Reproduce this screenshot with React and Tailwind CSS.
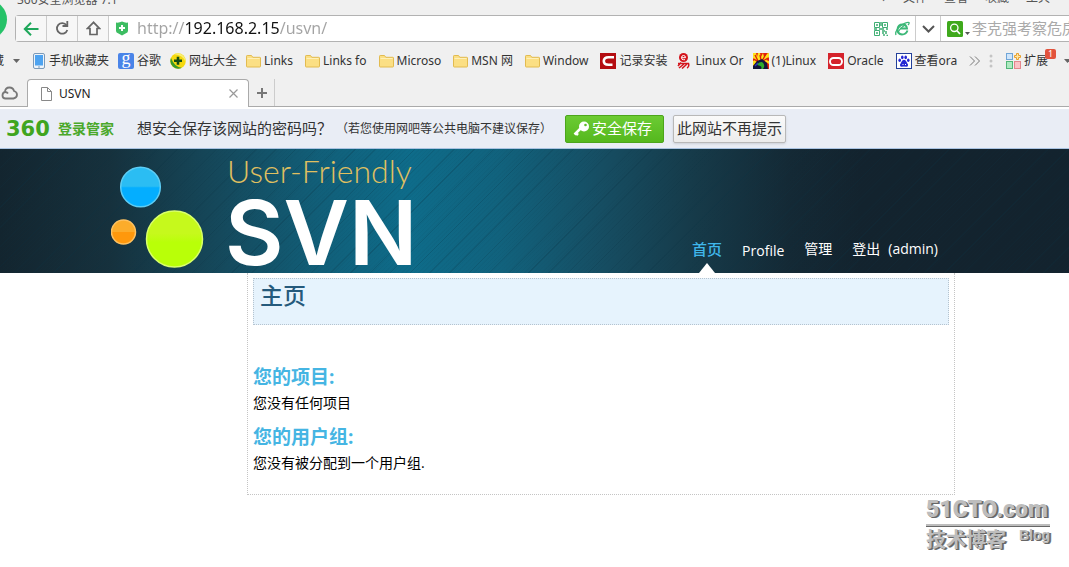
import React from "react";

const uiFont = "font-['Noto_Sans','Noto_Sans_CJK_SC',sans-serif]";

const Folder = () => (
  <svg width="15" height="14" viewBox="0 0 15 14" className="shrink-0">
    <path d="M.5 2.2q0-.7.7-.7h4.3l1.3 1.8h7q.7 0 .7.7v8.3q0 .7-.7.7H1.2q-.7 0-.7-.7z" fill="#fbdf84" stroke="#e2bb50" />
    <path d="M1.5 4.5h12" stroke="#fff0b8" />
  </svg>
);

const Phone = () => (
  <svg width="12" height="16" viewBox="0 0 12 16" className="mx-px shrink-0">
    <rect x=".5" y=".5" width="11" height="15" rx="1.5" fill="#eef4fa" stroke="#7c9ab8" />
    <rect x="2" y="2" width="8" height="10.5" fill="#4ea3f0" />
    <path d="M5 14h2" stroke="#7c9ab8" />
  </svg>
);

const Google = () => (
  <span className="flex size-4 shrink-0 items-start justify-center rounded-xs bg-[#4a84e8] font-['Liberation_Serif',serif] text-lg leading-[10px] text-white">
    g
  </span>
);

const Sites = () => (
  <svg width="16" height="16" viewBox="0 0 16 16" className="shrink-0">
    <circle cx="8" cy="8" r="7.8" fill="#f5d90e" />
    <path d="M1 5A7.8 7.8 0 0 0 12 14.700Q5 15 1 5z" fill="#3a9a2a" />
    <path d="M4 1.300A7.800 7.800 0 0 1 15.500 9Q13 2 4 1.300z" fill="#f9ee70" />
    <path d="M8 3.800v8M4 7.800h8" stroke="#134d12" strokeWidth="2.600" />
  </svg>
);

const RedC = () => (
  <svg width="16" height="16" viewBox="0 0 16 16" className="shrink-0">
    <rect width="16" height="16" fill="#b40d12" />
    <path d="M14 4.200H8.500Q3.800 4.200 3.800 8t4.700 3.800H12.500" fill="none" stroke="#fff" strokeWidth="2.600" />
  </svg>
);

const RedYi = () => (
  <svg width="14" height="16" viewBox="0 0 14 16" className="mx-px shrink-0">
    <circle cx="6.500" cy="4.500" r="4.500" fill="#d4141c" />
    <path d="M4.500 4.700h4q0-2.200-2-2.200t-2 2.200 2 2h1.500" fill="none" stroke="#fff" />
    <path d="M1 10.500h10.500q1 3.500-1.500 4.500M4 9.500L1 13M7 11l-5 4M10 11l-5 4.500" fill="none" stroke="#d4141c" strokeWidth="1.500" />
  </svg>
);

const Flame = () => (
  <svg width="16" height="16" viewBox="0 0 16 16" className="shrink-0">
    <rect width="16" height="16" fill="#e3200c" />
    <path d="M0 0h3l1 4 1-4h2l1 4 2-4 1 4 4-4h1v4l-3 3 3 1v3L10 7 4 9 0 13V8l2-1-2-2z" fill="#ffe11a" />
    <path d="M2 2l3 6M7 2l1 5M13 1L9 8M1 6l4 3M15 5l-5 3" stroke="#d81d08" strokeWidth="1.300" />
    <path d="M0 16v-3l4-5 5-2 5 4 1 6z" fill="#12163a" />
    <path d="M4 12q1-3 5-3 4 3 1 7H8q2-3-4-4z" fill="#2eab2b" />
    <path d="M2 13l3-3" stroke="#2b36c4" strokeWidth="1.500" />
  </svg>
);

const OracleIcon = () => (
  <svg width="16" height="16" viewBox="0 0 16 16" className="shrink-0">
    <rect width="16" height="16" fill="#d5232b" />
    <rect x="2" y="5" width="12" height="7" rx="3.500" fill="none" stroke="#fff" strokeWidth="1.900" />
  </svg>
);

const Paw = () => (
  <svg width="16" height="16" viewBox="0 0 16 16" className="shrink-0">
    <rect x=".5" y=".5" width="15" height="15" fill="#fff" stroke="#23409a" />
    <g fill="#2528d4">
      <ellipse cx="3.700" cy="7.300" rx="1.300" ry="1.800" />
      <ellipse cx="6.300" cy="4.300" rx="1.300" ry="1.900" />
      <ellipse cx="9.700" cy="4.300" rx="1.300" ry="1.900" />
      <ellipse cx="12.300" cy="7.300" rx="1.300" ry="1.800" />
      <path d="M8 6.800q1.500 0 2.500 2t1.500 2.700q.5 2.300-1.500 2.300L8 13.500l-2.500.3q-2 0-1.500-2.300.5-.7 1.500-2.700t2.500-2z" />
    </g>
    <path d="M6.500 11.500h1M9 11.500h1" stroke="#fff" />
  </svg>
);

const Extensions = () => (
  <svg width="16" height="16" viewBox="0 0 16 16" className="shrink-0">
    <rect x=".5" y=".5" width="6" height="6" fill="#cfe5fa" stroke="#6fa5d8" />
    <path d="M10.500.5h2v2h2v2h-2v2h-2v-2h-2v-2h2z" fill="#fde7a8" stroke="#e8a02e" />
    <rect x=".5" y="8.500" width="6" height="7" fill="#aee9c0" stroke="#52b778" />
    <rect x="8.500" y="8.500" width="6" height="7" fill="#fbc2c6" stroke="#e3878d" />
  </svg>
);

const bookmarks = [
  { label: "手机收藏夹", icon: Phone },
  { label: "谷歌", icon: Google },
  { label: "网址大全", icon: Sites },
  { label: "Links", icon: Folder, latin: true },
  { label: "Links fo", icon: Folder, latin: true },
  { label: "Microso", icon: Folder, latin: true },
  { label: "MSN 网", icon: Folder, latin: true },
  { label: "Window", icon: Folder, latin: true },
  { label: "记录安装", icon: RedC },
  { label: "Linux Or", icon: RedYi },
  { label: "(1)Linux", icon: Flame, latin: true },
  { label: "Oracle", icon: OracleIcon, latin: true },
  { label: "查看ora", icon: Paw },
];

const TitleBar = () => (
  <div className="flex h-[15px] justify-between overflow-hidden pr-[19px] pl-[17px] text-xs leading-4 text-[#555]">
    <span className="-mt-2">360安全浏览器 7.1</span>
    <div className="-mt-2.5 flex gap-[17px]">
      <span>›</span>
      <span>文件</span>
      <span>查看</span>
      <span>收藏</span>
      <span>工具</span>
    </div>
  </div>
);

const AddressBar = () => (
  <div className="ml-[15px] flex h-[27px] rounded-l-sm border border-r-0 border-[#b2b2b2] bg-white">
    <button aria-label="后退" className="flex w-[31px] items-center justify-center border-r border-[#ccc] bg-[#f7f7f7]">
      <svg width="16" height="14" viewBox="0 0 16 14" fill="none" stroke="#1fa75b" strokeWidth="2">
        <path d="M15.500 7H2M8 .8L1.800 7 8 13.200" />
      </svg>
    </button>
    <button aria-label="刷新" className="flex w-[31px] items-center justify-center border-r border-[#ccc] bg-[#f7f7f7]">
      <svg width="14" height="15" viewBox="0 0 14 15" fill="none" stroke="#666" strokeWidth="1.800">
        <path d="M11.500 4.200A5.300 5.300 0 1 0 12.300 9" />
        <path d="M12.300 0v5H7.500" />
      </svg>
    </button>
    <button aria-label="主页" className="flex w-[31px] items-center justify-center border-r border-[#ccc] bg-[#f7f7f7]">
      <svg width="15" height="15" viewBox="0 0 15 15" fill="none" stroke="#666" strokeWidth="1.700">
        <path d="M7.500 1.300L1.500 7.500H4V13.500H11V7.500h2.500z" />
      </svg>
    </button>
    <div className="flex min-w-0 flex-1 items-center pl-1.5">
      <svg width="14" height="15" viewBox="0 0 14 15" className="shrink-0">
        <path d="M1 1.500Q4 2 7 .5 10 2 13 1.500V10q0 1.500-2.500 2.500L7 14.500 3.500 12.500Q1 11.500 1 10z" fill="#3dbd62" />
        <path d="M7 4v6M4 7h6" stroke="#fff" strokeWidth="2" />
      </svg>
      <input
        aria-label="地址"
        defaultValue="http://192.168.2.15/usvn/"
        className="mb-0.5 ml-2 min-w-0 flex-1 bg-[linear-gradient(to_right,#a3a3a3_48px,#111_48px,#111_142px,#a3a3a3_142px)] bg-clip-text text-base leading-[22px] text-transparent outline-none"
      />
      <svg width="14" height="14" viewBox="0 0 14 14" className="shrink-0" fill="none" stroke="#3fae74">
        <path d="M.5.5h5v5h-5zM8.500.5h5v5h-5zM.5 8.500h5v5h-5z" />
        <path d="M2 3h2M10 3h2M2 11h2M7 0v4M0 7h3M5 7h5M12 7h2M8 9h3M12 9v3M8 11h2M9 13h2M12.500 13.500h1.500" strokeWidth="1.500" />
      </svg>
      <svg width="15" height="15" viewBox="0 0 15 15" className="mr-[5px] ml-[7px] shrink-0" fill="none" stroke="#3cb878">
        <path d="M12.500 9.500Q11 13.500 7 13.500 2.500 13 2.500 8.500 3 3.500 7.500 3.500q4 0 4.500 4H5.500" strokeWidth="2" />
        <path d="M1 14Q-.5 10 6 4.500 12 .5 14 1.500q.5 1-1 2.500M3 11.500Q5 7 11 3.500" strokeWidth="1.300" />
      </svg>
    </div>
    <button aria-label="历史网址" className="flex w-[26px] items-center justify-center border-x border-[#ccc]">
      <svg width="13" height="8" viewBox="0 0 13 8" fill="none" stroke="#555" strokeWidth="2">
        <path d="M1 1l5.500 5.500L12 1" />
      </svg>
    </button>
    <div className="flex w-32 items-center pl-1.5">
      <svg width="16" height="16" viewBox="0 0 16 16" className="shrink-0" fill="none" stroke="#fff">
        <rect width="16" height="16" rx="1.500" fill="#3fa91c" stroke="none" />
        <circle cx="7.300" cy="6.800" r="3.700" strokeWidth="1.300" />
        <path d="M10 9.700l3 3.300" strokeWidth="1.700" />
      </svg>
      <svg width="5" height="3" viewBox="0 0 5 3" className="mx-0.5 mt-2.5 shrink-0" fill="#555">
        <path d="M0 0h5L2.500 3z" />
      </svg>
      <input
        aria-label="搜索"
        placeholder="李克强考察危房改造"
        className="mb-0.5 min-w-0 flex-1 text-[15px] leading-[22px] outline-none placeholder:text-[#aaa]"
      />
    </div>
  </div>
);

const BookmarkBar = () => (
  <div className="flex h-[37px] items-center overflow-hidden text-xs leading-4 whitespace-nowrap text-[#333]">
    <span className="-ml-2">藏</span>
    <svg width="7" height="4" viewBox="0 0 7 4" className="mr-3 ml-[9px] shrink-0" fill="#666">
      <path d="M0 0h7L3.500 4z" />
    </svg>
    <div className="flex min-w-0 gap-[9px]">
      {bookmarks.map(({ label, icon: Icon, latin }) => (
        <a key={label} href="#" className={`flex shrink-0 items-center gap-[3px] ${latin ? "pr-[3px]" : ""}`}>
          <Icon />
          {label}
        </a>
      ))}
    </div>
    <button aria-label="更多" className="ml-3 shrink-0">
      <svg width="12" height="10" viewBox="0 0 12 10" fill="none" stroke="#777">
        <path d="M1 .5L5.500 5 1 9.500M6 .5L10.500 5 6 9.500" />
      </svg>
    </button>
    <svg width="4" height="14" viewBox="0 0 4 14" className="mx-2 shrink-0" fill="#c4c4c4">
      <circle cx="2" cy="2" r="1.500" />
      <circle cx="2" cy="7" r="1.500" />
      <circle cx="2" cy="12" r="1.500" />
    </svg>
    <button className="relative ml-auto flex shrink-0 items-center gap-[2px]">
      <Extensions />
      扩展
      <span className="absolute -top-1 -right-2 flex h-2.5 w-[11px] items-center justify-center rounded-xs bg-[#e2533d] text-[9px] leading-none text-white">
        1
      </span>
    </button>
    <svg width="7" height="4" viewBox="0 0 7 4" className="-mr-0.5 ml-4 shrink-0" fill="#666">
      <path d="M0 0h7L3.500 4z" />
    </svg>
  </div>
);

const TabStrip = () => (
  <div className="flex h-7 items-stretch border-b border-[#aaa]">
    <div className="flex w-[27px] items-center">
      <svg width="18" height="14" viewBox="0 0 18 14" fill="none" stroke="#777" strokeWidth="1.800">
        <path d="M5.500 12.500Q2.500 12.500 2.500 9.500T5 6Q5 1.500 9.500 1.500 13 1.500 14 5q3 .8 3 3.800t-3.500 3.700z" />
        <path d="M5 6q2 0 3 1.500" />
      </svg>
    </div>
    <div className="-mb-px flex w-[222px] items-center rounded-t-sm border border-b-0 border-[#aaa] bg-white pr-2.5 pl-3 text-xs text-[#222]">
      <svg width="13" height="14" viewBox="0 0 13 14" className="mr-1.5 shrink-0" fill="#fff" stroke="#888">
        <path d="M1.500.5h6l4 4v9h-10zM7.500.5v4h4" />
      </svg>
      USVN
      <button aria-label="关闭标签" className="ml-auto">
        <svg width="9" height="9" viewBox="0 0 9 9" stroke="#999" strokeWidth="1.200">
          <path d="M.5.5l8 8M8.500.5l-8 8" />
        </svg>
      </button>
    </div>
    <button aria-label="新标签" className="flex w-[26px] items-center justify-center border-r border-[#ccc]">
      <svg width="10" height="10" viewBox="0 0 10 10" stroke="#777" strokeWidth="2">
        <path d="M5 0v10M0 5h10" />
      </svg>
    </button>
  </div>
);

const PasswordBar = () => (
  <div className="flex h-[42px] items-center border-t-2 border-b border-t-white border-b-[#a9c3e2] bg-[#e9edf5] pl-1.5 whitespace-nowrap text-[#333]">
    <span className="w-[52px] font-['DejaVu_Sans',sans-serif] text-[21px] leading-6 font-bold text-[#3fa520]">360</span>
    <span className="text-sm font-bold text-[#4aa82a]">登录管家</span>
    <span className="ml-[23px] text-[15px]">想安全保存该网站的密码吗？</span>
    <span className="ml-1 text-xs">（若您使用网吧等公共电脑不建议保存）</span>
    <button className="ml-[13px] flex h-7 w-[99px] items-center justify-center gap-0.5 rounded-xs border border-[#4ba51c] bg-linear-to-b from-[#6bcb33] to-[#55b81d] pr-1 text-[15px] text-white">
      <svg width="17" height="16" viewBox="0 0 17 16">
        <path d="M8 7L1.500 13.500M3 12l2 2" stroke="#fff" strokeWidth="2.500" />
        <circle cx="11" cy="5.500" r="5" fill="#fff" />
        <circle cx="12.500" cy="4" r="1.300" fill="#5dbd26" />
      </svg>
      安全保存
    </button>
    <button className="ml-[9px] flex h-7 w-[113px] items-center justify-center rounded-xs border border-[#b8b8b8] bg-linear-to-b from-[#fafafa] to-[#ececec] text-[15px] shadow-sm">
      此网站不再提示
    </button>
  </div>
);

const Bubbles = () => (
  <svg width="96" height="106" viewBox="0 0 96 106" className="mt-[15px] shrink-0">
    <defs>
      <linearGradient id="blue" x2="0" y2="1">
        <stop offset=".48" stopColor="#2bbdf3" />
        <stop offset=".52" stopColor="#04aeff" />
      </linearGradient>
      <linearGradient id="orange" x2="0" y2="1">
        <stop offset=".48" stopColor="#fcac2b" />
        <stop offset=".52" stopColor="#ff980c" />
      </linearGradient>
      <linearGradient id="lime" x2="0" y2="1">
        <stop offset=".4" stopColor="#c6f91c" />
        <stop offset=".56" stopColor="#b9ff08" />
      </linearGradient>
    </defs>
    <circle cx="29.500" cy="23" r="19.800" fill="url(#blue)" stroke="#5dcdf5" strokeWidth="1.500" />
    <circle cx="12.500" cy="68" r="12" fill="url(#orange)" stroke="#ffc261" strokeWidth="1.500" />
    <circle cx="63.500" cy="75" r="28" fill="url(#lime)" stroke="#d9ff6b" strokeWidth="1.500" />
  </svg>
);

const SiteHeader = () => (
  <header className="bg-[repeating-linear-gradient(135deg,transparent_0_13px,#0b334433_13px_14px),repeating-linear-gradient(135deg,transparent_0_2px,#0b33440d_2px_3px),linear-gradient(to_right,#13252f_0,#16313d_110px,#15495c_220px,#115f79_320px,#0e6c8a_410px,#11627d_500px,#164e63_600px,#163b4a_690px,#142935_790px,#13232e_860px)] font-['Open_Sans','Noto_Sans_CJK_SC',sans-serif]">
    <div className="mx-auto flex h-[124px] max-w-[847px]">
      <Bubbles />
      <a href="#" className="ml-[18px] flex flex-col pt-1 whitespace-nowrap">
        <span className="pl-0.5 font-['Lato',sans-serif] text-[32px] leading-9 font-light text-[#e0c060]">User-Friendly</span>
        <span className="font-['Inter',sans-serif] text-[90px] leading-[88px] font-semibold text-white">SVN</span>
      </a>
      <nav className="mr-5 ml-auto flex items-end gap-5 text-sm leading-5 text-white">
        <a href="#" className="flex flex-col items-center text-[15px] font-medium text-[#3fb6ea]">
          首页
          <svg width="16" height="10" viewBox="0 0 16 10" className="mt-1" fill="#fff">
            <path d="M8 0l8 10H0z" />
          </svg>
        </a>
        <a href="#" className="mb-3">Profile</a>
        <a href="#" className="mb-3.5">管理</a>
        <a href="#" className="mb-3.5 flex gap-2">
          <span>登出</span>
          <span>(admin)</span>
        </a>
      </nav>
    </div>
  </header>
);

const Watermark = () => (
  <div className="absolute right-[19px] bottom-4 w-[124px] text-[#bdbdbd] [text-shadow:1px_1px_0_#666,2px_1px_0_#777]">
    <div className="font-['Roboto',sans-serif] text-[23px] leading-[29px] font-black">51CTO.com</div>
    <div className="h-[3px] border-b border-[#666] bg-[#bdbdbd]" />
    <div className="flex items-start justify-between leading-6 font-bold">
      <span className="font-['Noto_Sans_CJK_SC',sans-serif] text-xl leading-6">技术博客</span>
      <span className="font-['Liberation_Sans',sans-serif] text-sm leading-4">Blog</span>
    </div>
  </div>
);

const App = () => {
  return (
    <div className={`relative min-h-screen overflow-hidden bg-white ${uiFont}`}>
      <div className="bg-[#f0f0f0]">
        <div className="absolute top-0 -left-8 size-[39px] rounded-full bg-[#25c268]" />
        <TitleBar />
        <AddressBar />
        <BookmarkBar />
        <TabStrip />
      </div>
      <PasswordBar />
      <SiteHeader />
      <div className="mx-auto max-w-[847px] pr-[3px] pl-[136px] font-['Open_Sans','Noto_Sans_CJK_SC',sans-serif]">
        <main className="border border-t-0 border-dotted border-[#c4c4c4] px-[5px] pt-[5px] pb-[19px]">
          <div className="h-[47px] border border-dotted border-[#b5c3cf] bg-[#e6f3fd] px-1.5">
            <h1 className="text-[23px] leading-8 font-medium text-[#255a7c]">主页</h1>
          </div>
          <section className="mt-10">
            <h2 className="text-[19px] leading-6 font-bold text-[#45b5e3]">您的项目:</h2>
            <p className="mt-0.5 text-sm leading-6 text-black">您没有任何项目</p>
          </section>
          <section className="mt-2.5">
            <h2 className="text-[19px] leading-6 font-bold text-[#45b5e3]">您的用户组:</h2>
            <p className="mt-0.5 text-sm leading-6 text-black">您没有被分配到一个用户组.</p>
          </section>
        </main>
      </div>
      <Watermark />
    </div>
  );
};

export default App;
